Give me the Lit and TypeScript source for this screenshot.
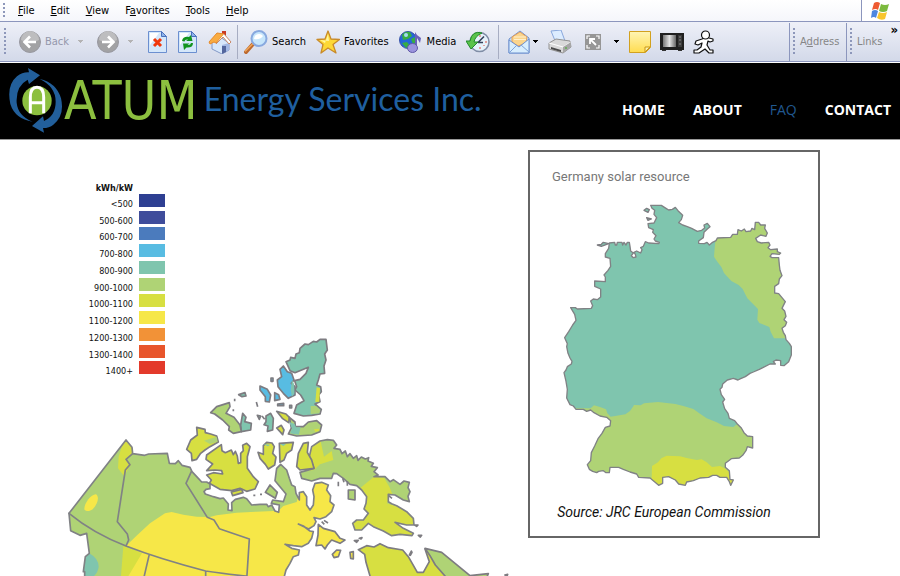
import { LitElement, html, css, svg } from "lit";
import { customElement } from "lit/decorators.js";

const caret = html`<svg class="caret" width="7" height="4" viewBox="0 0 7 4"><path d="M1 0h5v1h-1v1h-1v1h-1v-1h-1v-1h-1z" fill="currentColor"/></svg>`;

const icon = (w: number, h: number, body: unknown) =>
  html`<svg width=${w} height=${h} viewBox="0 0 ${w} ${h}" aria-hidden="true">${body}</svg>`;

const backIcon = icon(22, 22, svg`
  <circle cx="11" cy="11" r="10.5" fill="#a2a2a4" stroke="#9898a0"/>
  <path d="M2 9a9 9 0 0 1 18 0q-9 5-18 0" fill="#bdbdbf"/>
  <path d="M17 11H6M11 5.5L5.5 11l5.5 5.5" fill="none" stroke="#fff" stroke-width="2.6"/>`);
const forwardIcon = icon(22, 22, svg`
  <circle cx="11" cy="11" r="10.5" fill="#a2a2a4" stroke="#9898a0"/>
  <path d="M2 9a9 9 0 0 1 18 0q-9 5-18 0" fill="#bdbdbf"/>
  <path d="M5 11h11M11 5.5l5.5 5.5-5.5 5.5" fill="none" stroke="#fff" stroke-width="2.6"/>`);
const stopIcon = icon(20, 24, svg`
  <path d="M.5 1.500h13l5 5v16H.5z" fill="#d5e7fa" stroke="#6b8fd0"/><path d="M2 3h9L2 15z" fill="#fff"/>
  <path d="M13.500 1.500v5h5z" fill="#8fb4ea" stroke="#4a70bd"/>
  <path d="M6 9l7 7M13 9l-7 7" stroke="#f0380c" stroke-width="3"/>`);
const refreshIcon = icon(20, 24, svg`
  <path d="M.5 1.500h13l5 5v16H.5z" fill="#d5e7fa" stroke="#6b8fd0"/><path d="M2 3h9L2 15z" fill="#fff"/>
  <path d="M13.500 1.500v5h5z" fill="#8fb4ea" stroke="#4a70bd"/>
  <path d="M4 11q1-5 7-4l2-2 1.500 6H8l2-1.500Q7 9 6.500 11.500zM15 13q0 5-6.500 4.500L6 20l-1-6.500h6.500l-2 1.500q3 .5 3.500-2z" fill="#12941f"/>`);
const homeIcon = icon(24, 24, svg`
  <path d="M4 12l8-5 9 6v7l-7 4L4 19z" fill="#d7e7fb" stroke="#8398c6"/>
  <path d="M14 15l7-2v7l-7 4z" fill="#a3b8e4"/><path d="M14 16h4v6l-4 2z" fill="#53669d"/>
  <path d="M14 1h4v7l-4-3z" fill="#c93a24"/>
  <path d="M1 12L9 3l7 1-8 9-2-1-4 2z" fill="#f9ac42" stroke="#e68a2a"/>
  <path d="M16 4l7 8-2 2-6-7-7 7" fill="#fff" stroke="#c98a68"/>`);
const searchIcon = icon(24, 24, svg`
  <path d="M2 22L9 14" stroke="#bc692d" stroke-width="4" stroke-linecap="round"/>
  <path d="M1.500 21L9 13.500" stroke="#f2a758" stroke-width="1.500" stroke-linecap="round"/>
  <circle cx="15" cy="8.500" r="7.500" fill="#c7e6fb" stroke="#88a9df" stroke-width="2"/>
  <path d="M10 9a5 5 0 0 1 9-3q-3 4-9 3" fill="#fff"/>`);
const starIcon = icon(24, 24, svg`
  <path d="M12 1l3 8 8.500.5-6.500 5 3 8.500-8-5-7 5 2-8.500L1 9.500 9 9z" fill="#fdd835" stroke="#c98a2a" stroke-width="1.300" stroke-linejoin="round"/>
  <path d="M12 4l1 7-9-1 5 3z" fill="#fff5a2"/>`);
const mediaIcon = icon(24, 24, svg`
  <circle cx="9" cy="10" r="8.500" fill="#2467d8" stroke="#3b55aa"/>
  <path d="M3 5q3-4 8-3l2 4-4 3-5 1zM3 13l5-1 3 4-4 2zM12 9l4-2 1 6-3 1z" fill="#37ad43"/>
  <circle cx="7" cy="5" r="2" fill="#a5dcf0"/>
  <path d="M16 18V2l2 3 4 3-1 5-3-5v11" fill="#6861b8"/><ellipse cx="13.500" cy="18" rx="5" ry="4.500" fill="#9b94dd" stroke="#625aa8"/>`);
const historyIcon = icon(24, 24, svg`
  <circle cx="13.500" cy="12" r="9.500" fill="#e6f2fb" stroke="#808da6" stroke-width="1.600"/>
  <path d="M14 5v2M21 12h-2M14 19v-2M18.500 16l-1-1" stroke="#e05040"/>
  <path d="M12 12.500l6-6M12 12.500h5" stroke="#36435d" stroke-width="1.600"/>
  <path d="M16 3Q6 0 4 11H0l5 8 7-7H8q1-6 8-9z" fill="#5bc34b" stroke="#228a2c"/>`);
const mailIcon = icon(22, 24, svg`
  <path d="M1 9L12 1l9 7v15H1z" fill="#c5def7" stroke="#6f91cf"/>
  <path d="M4 7l8-5 7 5-1 6-8 3-6-4z" fill="#fbd58d" stroke="#e4a05b"/>
  <path d="M6 7h12M6 9.500h12" stroke="#fff0cc"/>
  <path d="M1 10l10 7 10-8v14H1z" fill="#d8eefe" stroke="#6f91cf"/><path d="M1 23l8-8M21 22l-8-7" stroke="#80a3d9"/>`);
const printIcon = icon(24, 24, svg`
  <path d="M3 1l10-1 4 11-9 2z" fill="#dcecff" stroke="#89a8dc"/>
  <path d="M1 13l7-4 14 2 1 6-8 6-14-4z" fill="#d9d9d9" stroke="#929292"/>
  <path d="M1 13l14 4 8-5" fill="none" stroke="#fff"/><path d="M15 17v6l8-6v-5z" fill="#a6a6a6"/>
  <path d="M3 17l10 3v2L3 19z" fill="#4b4b4b"/><circle cx="18" cy="18" r="1" fill="#62ad50"/>`);
const resizeIcon = icon(16, 16, svg`
  <path d="M0 0h16v16H0z" fill="#969696"/><path d="M5 2H2v3M11 2h3v3M5 14H2v-3M11 14h3v-3" fill="none" stroke="#fff" stroke-width="1.200"/>
  <path d="M5 10V5h5M5 5l6 6" fill="none" stroke="#fff" stroke-width="1.800"/>`);
const noteIcon = icon(22, 22, svg`
  <defs><linearGradient id="note" x2="0" y2="1"><stop stop-color="#fff5b4"/><stop offset="1" stop-color="#ffdc50"/></linearGradient></defs>
  <path d="M.5.500h21v16l-5 5H.5z" fill="url(#note)" stroke="#d2a11f"/><path d="M16 21v-5h5z" fill="#fff2a6" stroke="#c8971b"/>`);
const tvIcon = icon(24, 20, svg`
  <defs><linearGradient id="tube"><stop stop-color="#777"/><stop offset=".5" stop-color="#e4e4e4"/><stop offset="1" stop-color="#666"/></linearGradient></defs>
  <path d="M0 1h24v17H0z" fill="#202020"/><path d="M3 3h13v12H3z" fill="url(#tube)"/>
  <path d="M18 3h4v12h-4z" fill="#3b3b3b"/><path d="M19 5h2M19 8h2M19 12h2" stroke="#888"/><path d="M2 18h4v1H2zM18 18h4v1h-4z" fill="#333"/>`);
const runnerIcon = icon(21, 24, svg`
  <g fill="#fff" stroke="#111" stroke-width="1.200" stroke-linejoin="round">
  <path d="M9 9l-6 2-1 3 3 1 4-2-1 4-4 3H1v3h5l6-4 4 4h4v-3h-3l-3-5 1-4 2 1 3-1v-2l-4-1-2-2z"/><circle cx="12.500" cy="5" r="4"/></g>`);
const flagIcon = icon(20, 20, svg`
  <path d="M3 2q3-2 6 0L7 9Q5 7 1 9z" fill="#ee5a31"/><path d="M10 3q4 2 8 0l-2 7q-4 2-8 0z" fill="#7cba3e"/>
  <path d="M1 10q3-2 6 0l-2 7q-2-2-5 0z" fill="#4d86df"/><path d="M8 11q4 2 8 0l-2 7q-4 2-8-1z" fill="#f8c52e"/>`);

const menus: [string, string, string][] = [
  ["", "F", "ile"], ["", "E", "dit"], ["", "V", "iew"], ["F", "a", "vorites"], ["", "T", "ools"], ["", "H", "elp"],
];

@customElement("browser-bars")
class BrowserBars extends LitElement {
  static styles = css`
    :host { display: block; font: 11px/14px "DejaVu Sans Condensed", "DejaVu Sans", sans-serif; color: #000; border-bottom: 1px solid #fff; }
    button { border: 0; padding: 0; margin: 0; background: none; font: inherit; color: inherit; display: flex; align-items: center; gap: 4px; white-space: nowrap; }
    svg { flex: none; display: block; }
    .menu { display: flex; height: 21px; background: linear-gradient(#fff, #f5f6fb); border-bottom: 1px solid #8c96bd; }
    .menu nav { display: flex; gap: 16px; flex: 1; align-items: center; }
    .grip { flex: none; width: 3px; margin: 3px 12px 3px 3px; background: radial-gradient(circle at 1px 1px, #8d97ba 1px, transparent 1px) 0 0 / 3px 4px; }
    .flag { width: 38px; display: flex; justify-content: center; align-items: center; border-left: 1px solid #8c96bd; background: #fff; }
    .tools { display: flex; height: 38px; padding-top: 1px; background: linear-gradient(#eef0f8, #d3d9e9); border-bottom: 1px solid #8c96bd; }
    .tools .grip { margin: 5px 12px 5px 4px; }
    .tools .side .grip { margin: 5px 4px 5px 3px; }
    .group { display: flex; align-items: center; }
    .first { width: 218px; gap: 10px; }
    .second { width: 254px; padding-left: 6px; gap: 10px; }
    .third { flex: 1; padding-left: 9px; gap: 9px; }
    .rule { width: 1px; margin: 2px 0; background: #a7adc2; }
    .off { color: #9497ab; }
    .off .caret { color: #b4b3b4; }
    .back .caret { margin-left: 4px; }
    .tight { gap: 2px; }
    .resize { gap: 12px; padding-left: 4px; }
    .forward { padding: 0 4px 0 3px; gap: 8px; }
    .side { display: flex; align-items: center; color: #868686; border-left: 1px solid #8c96bd; }
    .side .grip { align-self: stretch; }
    .address { width: 56px; }
    .links { width: 53px; position: relative; }
    .more { position: absolute; right: 2px; top: 0; color: #000; font-weight: bold; font-size: 13px; }
  `;
  render() {
    return html`
      <div class="menu"><span class="grip"></span>
        <nav>${menus.map(([a, b, c]) => html`<button><span>${a}<u>${b}</u>${c}</span></button>`)}</nav>
        <span class="flag">${flagIcon}</span>
      </div>
      <div class="tools"><span class="grip"></span>
        <div class="group first">
          <button class="off back">${backIcon}<span>Back</span>${caret}</button>
          <button class="off forward" aria-label="Forward">${forwardIcon}${caret}</button>
          <button aria-label="Stop">${stopIcon}</button>
          <button aria-label="Refresh">${refreshIcon}</button>
          <button aria-label="Home">${homeIcon}</button>
        </div>
        <span class="rule"></span>
        <div class="group second">
          <button>${searchIcon}Search</button>
          <button>${starIcon}Favorites</button>
          <button>${mediaIcon}Media</button>
          <button aria-label="History">${historyIcon}</button>
        </div>
        <span class="rule"></span>
        <div class="group third">
          <button class="tight" aria-label="Mail">${mailIcon}${caret}</button>
          <button aria-label="Print">${printIcon}</button>
          <button class="resize" aria-label="Resize">${resizeIcon}${caret}</button>
          <button aria-label="Note">${noteIcon}</button>
          <button aria-label="Video">${tvIcon}</button>
          <button aria-label="Messenger">${runnerIcon}</button>
        </div>
        <div class="side address"><span class="grip"></span><span>A<u>d</u>dress</span></div>
        <div class="side links"><span class="grip"></span><span>Links</span><button class="more" aria-label="More links">»</button></div>
      </div>`;
  }
}

@customElement("site-header")
class SiteHeader extends LitElement {
  static styles = css`
    :host { display: flex; align-items: center; height: 76px; background: #000; border-bottom: 1px solid #999; padding: 0 9px; }
    .brand { display: flex; align-items: center; color: #1f5f9f; text-decoration: none; white-space: nowrap; }
    .atum { font: 53px/60px "DejaVu Sans Condensed", "DejaVu Sans", sans-serif; color: #8cbf3f; margin-left: 1px; }
    .name { font: 400 32px/40px Lato, sans-serif; margin-left: 6px; padding-bottom: 4px; }
    nav { margin-left: auto; display: flex; gap: 28px; padding-top: 17px; font: 700 14px/20px "Open Sans", sans-serif; }
    nav a { color: #fff; text-decoration: none; }
    nav .current { color: #20588f; font-weight: 400; }
  `;
  render() {
    return html`
      <a class="brand" href="#">
        <svg width="54" height="66" viewBox="0 0 162 198" aria-hidden="true">
          <g fill="#225f9b"><path d="M57 0l36 22-33 26-4-13Q20 54 23 104q4 40 48 57Q18 153 4 108-8 52 24 25q16-13 36-12z"/>
          <path d="M105 194L69 174l33-29 3 14q35-16 35-58 0-45-48-68 50 11 64 58 12 51-23 79-12 10-31 10z"/></g>
          <circle cx="84" cy="98" r="44" fill="#8cbf3f"/>
          <path d="M64 136V88q0-30 20-30t20 30v48M65 104h38" fill="none" stroke="#fff" stroke-width="9"/>
        </svg>
        <span class="atum">ATUM</span><span class="name">Energy Services Inc.</span>
      </a>
      <nav><a href="#">HOME</a><a href="#">ABOUT</a><a class="current" href="#">FAQ</a><a href="#">CONTACT</a></nav>`;
  }
}

const bands: [string, string][] = [
  ["<500", "#2e3f92"], ["500-600", "#3f4d9b"], ["600-700", "#4b7bbd"], ["700-800", "#58bce2"],
  ["800-900", "#7fc5ae"], ["900-1000", "#afd375"], ["1000-1100", "#d7df41"], ["1100-1200", "#f6e748"],
  ["1200-1300", "#f29237"], ["1300-1400", "#e8552b"], ["1400+", "#e33a2b"],
];

const germany = "M392 181L424 181 438 190 446 195 457 193 466 187 474 197 488 211 484 224 476 233 488 240 500 244 515 250 532 259 545 256 554 249 552 240 562 235 570 245 562 252 552 262 550 278 536 288 536 295 553 296 561 292 568 300 576 293 588 287 592 279 632 277 638 268 652 268 654 254 664 258 673 252 678 260 692 258 696 250 704 254 706 232 716 232 722 240 736 240 734 250 742 264 738 274 722 270 707 280 712 290 724 294 746 292 750 300 744 308 752 314 772 312 772 320 782 324 778 328 756 326 750 334 756 338 776 338 778 360 780 376 786 392 778 402 776 416 764 424 764 444 776 446 786 458 796 470 790 482 786 490 794 498 798 514 792 524 800 532 796 542 786 550 790 562 796 572 798 584 808 595 814 605 814 630 806 650 792 662 782 661 782 647 768 645 760 650 766 657 750 657 730 667 718 673 700 681 690 685 676 695 662 701 654 705 640 700 622 705 608 717 606 727 600 733 604 749 614 763 608 771 614 791 624 805 628 820 644 827 652 837 664 849 672 863 682 873 698 875 698 909 682 905 678 917 668 931 658 939 634 941 616 955 616 967 628 977 630 1003 640 1005 632 1021 628 1010 620 997 600 997 590 991 578 991 566 997 540 999 520 1007 500 1011 496 1021 476 1017 466 1005 446 995 428 997 428 1015 416 1021 400 1007 390 999 356 997 350 987 330 981 310 973 296 967 270 967 268 983 258 983 250 977 236 979 230 983 218 979 208 973 202 959 212 947 214 923 224 903 234 881 246 865 256 847 270 843 272 827 260 817 240 813 222 803 212 795 200 799 190 793 168 793 160 783 150 779 140 759 142 733 138 709 132 683 138 675 142 665 154 657 156 649 150 639 144 625 140 605 142 596 134 578 146 560 158 540 168 526 164 508 152 488 166 488 172 492 214 490 218 482 212 468 220 462 232 464 242 456 242 432 224 424 224 408 256 410 256 396 252 390 264 376 272 364 270 340 256 336 256 326 266 310 268 294 284 292 286 300 290 300 292 292 306 292 308 300 312 292 318 300 322 292 328 292 330 304 332 318 340 324 334 332 340 338 348 336 346 328 342 322 350 318 362 324 366 314 362 308 370 304 376 290 386 294 416 296 418 292 406 288 402 282 408 272 398 262 400 254 386 248 384 236 402 234 410 218 402 208 404 196 396 190Z";

const mainland = "M57 280L228 60 246 82 248 101 284 106 296 102 352 100 358 130 376 131 385 122 396 136 420 142 426 155 445 175 455 186 470 186 480 192 480 206 468 208 462 215 466 222 490 230 510 236 520 234 535 252 534 270 546 272 545 248 556 238 580 232 590 236 605 255 630 253 650 253 655 260 665 255 675 273 686 277 688 255 664 250 668 240 700 245 708 222 690 200 675 182 680 145 692 133 710 150 718 175 725 195 735 200 738 220 748 240 748 218 760 215 770 230 770 255 780 270 790 255 792 230 788 210 795 190 815 187 835 195 830 210 842 227 840 245 852 255 845 275 828 290 810 297 792 293 798 305 792 317 776 327 745 312 760 318 780 333 790 335 785 355 775 370 755 380 730 377 705 373 725 385 748 390 745 405 730 410 720 430 708 450 700 480 104 480 104 455 100 455 106 410 118 400 114 370 110 340 90 346 62 332Z";

const baffin = "M240 48L262 44 280 46 290 60 282 70 300 73 306 86 316 78 322 95 330 86 340 100 350 92 354 106 364 96 376 102 386 98 384 108 400 115 394 124 412 128 402 140 414 150 402 155 435 155 450 170 460 164 480 178 492 168 508 172 504 188 510 200 504 214 508 230 490 225 465 210 445 208 445 230 455 236 470 242 500 260 520 280 522 300 500 300 465 292 490 310 520 325 516 332 480 328 455 332 430 318 400 305 385 295 365 315 345 315 338 295 350 285 370 285 385 265 372 252 378 235 380 215 365 195 350 182 330 178 310 160 290 146 280 145 275 160 240 160 215 168 185 160 180 142 222 130 208 95 215 65Z";

@customElement("solar-page")
class SolarPage extends LitElement {
  static styles = css`
    :host { display: grid; grid-template-columns: minmax(0, 1fr) 292px; padding: 10px 80px 0 50px; align-items: start; color: #111; }
    .canada { margin: 0; display: grid; overflow: hidden; }
    .canada > * { grid-area: 1 / 1; }
    .canada svg { margin-top: 180px; display: block; }
    .legend { width: 115px; margin-top: 32px; font: 500 9px/12px "DejaVu Sans Condensed", "DejaVu Sans", sans-serif; }
    .unit { margin: 0 32px 0 0; text-align: right; font-weight: bold; }
    ul { list-style: none; margin: 0; padding: 0; height: 184px; display: grid; grid-template-rows: repeat(11, minmax(0, 1fr)); }
    li { display: grid; grid-template-columns: 1fr 26px; gap: 6px; text-align: right; line-height: 21px; align-items: start; }
    .swatch { height: 13px; }
    .germany { margin: 0; box-sizing: border-box; border: 2px solid #666; height: 388px; padding: 15px 22px; }
    h2 { margin: 0; font: 400 13px/20px Roboto, sans-serif; color: #777; }
    .germany svg { display: block; margin: 14px 0 11px 8px; }
    figcaption { font: italic 14px/20px Roboto, sans-serif; color: #111; text-align: center; margin-right: 20px; }
    .edge { fill: none; stroke: #808285; stroke-width: 5; stroke-linejoin: round; }
    .land { stroke: #7d7c81; stroke-width: 5; stroke-linejoin: round; }
    .germany .edge, .germany .land { stroke-width: 4; }
    .c7 { fill: #58bce2; } .c8 { fill: #7fc5ae; } .c9 { fill: #afd375; } .c10 { fill: #d7df41; } .c11 { fill: #f6e748; }
  `;
  render() {
    return html`
      <figure class="canada">
        <div class="legend">
          <p class="unit">kWh/kW</p>
          <ul>${bands.map(([label, color]) => html`<li><span>${label}</span><span class="swatch" style="background:${color}"></span></li>`)}</ul>
        </div>
        <svg width="470" height="246" viewBox="0 0 1410 738" role="img" aria-label="Canada solar resource">
          <defs>
            <clipPath id="main"><path d=${mainland}/></clipPath>
            <clipPath id="baf"><path d=${baffin}/></clipPath>
          </defs>
          <g transform="translate(0 270)">
            <g clip-path="url(#main)">
              <path class="c9" d="M0 0h900v500H0z"/>
              <path class="c10" d="M212 90L228 50 260 80 250 102 230 118 242 134 222 168 204 145 206 110ZM220 378L280 400 228 480H212Z"/>
              <path class="c11" d="M228 378L262 345 300 310 345 280 365 276 400 284 440 290 480 291 500 286 560 278 620 275 686 272 700 258 740 246 750 210 775 212 790 180 880 180V480H228L276 400Z"/>
              <path class="c11" d="M103 268C102 250 124 222 138 223 148 230 145 250 128 268 118 276 105 274 103 268Z"/>
              <path class="c8" d="M118 400Q146 416 146 440 144 460 124 475H90V400Z"/>
            </g>
            <path class="edge" d=${mainland}/>
            <path class="edge" stroke-linecap="round" d="M248 101L228 118 240 134 226 150 202 305 232 342 236 360 228 378M57 280Q130 340 228 378T467 453Q550 465 590 468M424 155L408 190 472 292 492 300 508 326 598 357 590 480M297 407L280 480M467 453V480"/>
            <g class="land">
              <path class="c10" d="M440 22L465 28 466 38 482 42 500 48 505 66 480 80 465 90 452 100 440 118 426 122 424 100 410 88 422 60 442 45Z"/>
              <path class="c10" d="M470 105L514 74 516 92 526 98 544 90 550 104 556 94 562 108 565 130 572 128 572 100 580 92 578 76 590 70 600 80 592 110 592 145 610 170 625 185 615 207 590 214 570 205 545 212 510 208 478 190 484 180 470 165 490 158 518 162 515 152 495 150 470 152 488 132 468 118Z"/>
              <path class="c10" d="M544 216L575 208 579 218 548 227Z"/>
            </g>
            <path class="c9" d="M462 62L500 50 503 65 480 72Z"/>
          </g>
          <g transform="translate(570 285)">
            <g clip-path="url(#baf)">
              <path class="c9" d="M150 0h420v400H150z"/>
              <path class="c10" d="M360 190L402 155 432 158 448 185 458 210 440 235 560 270 560 350H300V260ZM190 40H240L252 95 275 78 280 105 240 118 222 135 180 140Z"/>
            </g>
            <path class="edge" d=${baffin}/>
            <g class="land">
              <path class="c10" d="M70 62L80 52 96 54 103 65 98 85 108 96 104 120 85 132 76 118 60 100 54 82 70 88Z"/>
              <path class="c10" d="M118 55L160 52 155 75 140 85 132 105 120 112ZM190 55L205 52 202 82 215 105 222 130 180 135 170 125 175 85Z"/>
              <path class="c9" d="M76 202L90 180 112 202 106 220ZM325 195L345 195 345 225 325 222Z"/>
              <path class="c11" d="M235 298L250 310 285 320 300 340 315 345 300 355 275 345 262 360 255 372 245 360 228 362 234 330ZM277 388L290 375 302 376 295 395 282 398ZM330 382L340 380 340 402 332 400Z"/>
              <path class="c10" d="M355 374L380 362 402 366 420 356 445 368 488 375 505 395 532 442 550 442 568 410 555 372 585 400 640 470 395 470 378 412 374 388Z"/>
              <path class="c9" d="M555 370L605 382 690 452 745 446 735 470H630L586 420 570 392Z"/>
              <path class="c9" d="M795 450l8-2-3 8Z"/>
              <path class="c10" d="M343 347L355 346 350 352ZM358 340l8-2-3 4ZM535 331h10l-4 5ZM524 300h10l-4 4ZM508 390l6-12 2 4-5 9ZM245 290l8 8M252 286l12 8M295 170v14M308 160l4 12M322 168v14M40 211h6M60 208h6M446 212l10 8"/>
            </g>
          </g>
          <g transform="translate(390 0)">
            <g class="land">
              <path class="c8" d="M318 95L330 90 332 82 345 85 348 72 358 68 360 55 375 42 385 44 400 34 410 36 420 28 438 28 442 60 434 72 438 90 432 108 434 130 420 132 415 150 410 165 422 170 424 185 416 195 420 215 405 222 424 238 420 252 395 256 370 258 342 250 350 225 372 212 362 195 345 180 350 170 344 152 360 148 378 130 385 112 345 128 330 122Z"/>
              <path class="c7" d="M300 118L310 108 322 125 335 130 342 150 334 160 345 170 345 195 325 205 310 190 300 178 294 170 292 150 305 140ZM240 168L262 178 272 195 268 216 256 214 256 200 240 180ZM284 188L296 194 300 208 284 212ZM293 222l18-2v7h-18ZM273 144h6v10h-6ZM229 216l4 14"/>
              <path class="c8" d="M176 194L195 188 198 198 186 200ZM188 250L198 262 194 275 214 280 212 300 184 305 182 285ZM258 258L272 250 280 265 278 300 262 304 264 288 252 284 258 275ZM232 256l10 2-4 10ZM246 258l8 10M329 226h6v8h-6ZM164 206v8"/>
              <path class="c9" d="M92 248L110 230 148 218 150 230 138 250 150 256 162 262 180 285 184 305 160 310 146 300 148 290 128 270 104 252ZM160 238v6"/>
              <path class="c10" d="M290 244L318 252 328 262 326 278 308 266ZM290 294L304 286 312 300 308 314Z"/>
              <path class="c9" d="M328 262L345 276 346 290 370 290 385 276 410 272 425 285 420 305 395 315 350 318 325 312 334 294Z"/>
            </g>
            <path class="c8" d="M328 276L344 282 348 292 362 292 356 314 330 310 336 296Z"/>
            <path class="c10" d="M410 172L420 174 418 215 406 216ZM402 298l16-2v6l-12 4Z"/>
            <path class="c9" d="M392 228L408 228 421 240 418 250 392 252Z"/>
            <path class="c8" d="M336 150L342 162 343 190 336 200 332 180ZM250 342l20 2-6 5ZM300 342h18l-8 6Z"/>
          </g>
        </svg>
      </figure>
      <figure class="germany">
        <h2>Germany solar resource</h2>
        <svg width="240" height="290" viewBox="120 168 720 870" role="img" aria-label="Germany">
          <defs><clipPath id="de"><path d=${germany}/></clipPath></defs>
          <g clip-path="url(#de)">
            <path class="c8" d="M100 150h750v900H100z"/>
            <path class="c9" d="M588 270L584 310 582 335 592 350 604 366 612 384 634 408 656 420 668 432 682 460 714 492 712 524 718 534 748 546 752 560 762 580H840V220H600Z"/>
            <path class="c9" d="M140 790L212 790 222 781 240 786 258 793 262 805 272 815 290 812 316 808 330 798 340 784 342 780 362 781 372 775 414 771 440 774 466 777 490 783 520 792 540 806 560 820 590 832 612 843 640 846 652 837 720 850V1040H190V860Z"/>
            <path class="c10" d="M394 1040L396 963 414 952 424 940 440 932 480 934 500 939 530 945 545 943 560 952 576 966 600 963 614 970 626 980 660 980V1040Z"/>
          </g>
          <path class="edge" d=${germany}/>
          <path class="land c8" d="M232 300L244 298 250 292 266 296 244 304ZM372 196L380 190 388 194 384 202ZM380 218L394 222 384 226Z"/>
        </svg>
        <figcaption>Source: JRC European Commission</figcaption>
      </figure>`;
  }
}

@customElement("app-root")
class AppRoot extends LitElement {
  static styles = css`
    :host { display: block; height: 100vh; overflow: hidden; background: #fff; }
  `;
  render() {
    return html`<browser-bars></browser-bars><site-header></site-header><solar-page></solar-page>`;
  }
}
